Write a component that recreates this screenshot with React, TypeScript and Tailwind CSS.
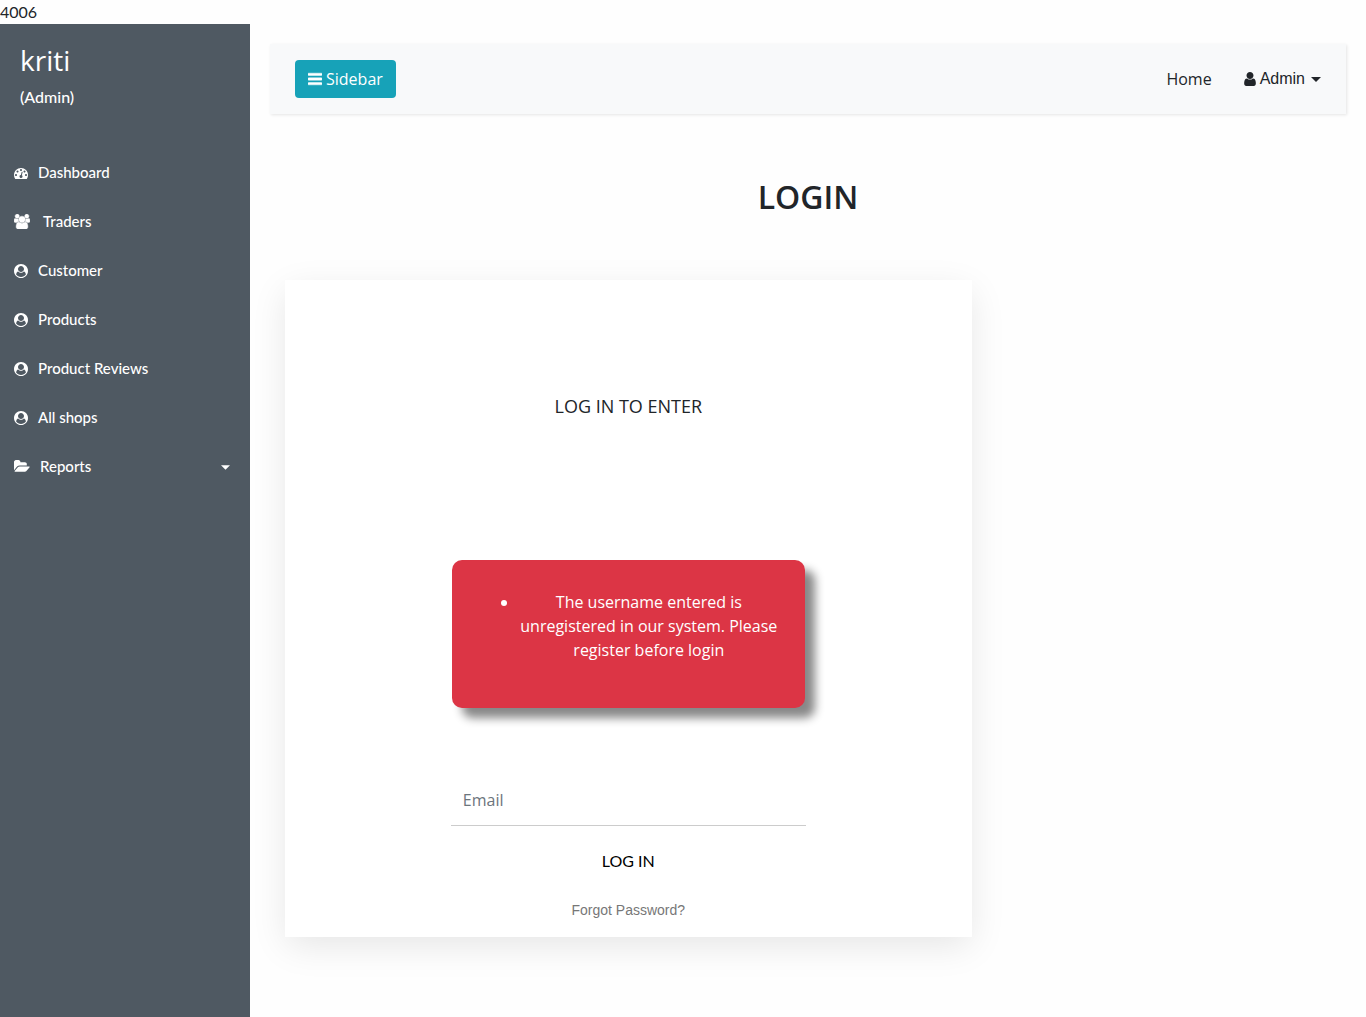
import React from "react";

type IconProps = { className?: string };

const wide = "h-4 w-[14px] shrink-0 fill-current";

function Gauge({ className = wide }: IconProps) {
  return (
    <svg viewBox="0 0 1792 1792" className={className} aria-hidden="true">
      <path d="M384 1152q0-53-37.5-90.5t-90.5-37.5-90.5 37.5-37.5 90.5 37.5 90.5 90.5 37.5 90.5-37.5 37.5-90.5zm192-448q0-53-37.5-90.5t-90.5-37.5-90.5 37.5-37.5 90.5 37.5 90.5 90.5 37.5 90.5-37.5 37.5-90.5zm428 481l101-382q6-26-7.5-48.5t-38.5-29.5-48 6.5-30 39.5l-101 382q-60 5-107 43.5t-63 98.5q-20 77 20 146t117 89 146-20 89-117q16-60-6-117t-72-91zm660-33q0-53-37.5-90.5t-90.5-37.5-90.5 37.5-37.5 90.5 37.5 90.5 90.5 37.5 90.5-37.5 37.5-90.5zm-640-640q0-53-37.5-90.5t-90.5-37.5-90.5 37.5-37.5 90.5 37.5 90.5 90.5 37.5 90.5-37.5 37.5-90.5zm448 192q0-53-37.5-90.5t-90.5-37.5-90.5 37.5-37.5 90.5 37.5 90.5 90.5 37.5 90.5-37.5 37.5-90.5zm320 448q0 261-141 483-19 29-54 29h-1402q-35 0-54-29-141-221-141-483 0-182 71-348t191-286 286-191 348-71 348 71 286 191 191 286 71 348z" />
    </svg>
  );
}

function Group() {
  return (
    <svg viewBox="0 0 1920 1792" className="h-[15px] w-4 shrink-0 fill-current" aria-hidden="true">
      <path d="M593 896q-162 5-265 128h-134q-82 0-138-40.500t-56-118.500q0-353 124-353 6 0 43.500 21t97.500 42.500 119 21.500q67 0 133-23-5 37-5 66 0 139 81 256zm1071 637q0 120-73 189.500t-194 69.500h-874q-121 0-194-69.500t-73-189.500q0-53 3.500-103.500t14-109 26.500-108.500 43-97.500 62-81 85.500-53.500 111.500-20q10 0 43 21.500t73 48 107 48 135 21.500 135-21.500 107-48 73-48 43-21.500q61 0 111.500 20t85.500 53.500 62 81 43 97.500 26.500 108.500 14 109 3.500 103.500zm-1024-1277q0 106-75 181t-181 75-181-75-75-181 75-181 181-75 181 75 75 181zm704 384q0 159-112.500 271.500t-271.500 112.500-271.500-112.500-112.500-271.500 112.500-271.500 271.500-112.500 271.500 112.500 112.500 271.500zm576 225q0 78-56 118.500t-138 40.500h-134q-103-123-265-128 81-117 81-256 0-29-5-66 66 23 133 23 59 0 119-21.500t97.500-42.500 43.500-21q124 0 124 353zm-128-609q0 106-75 181t-181 75-181-75-75-181 75-181 181-75 181 75 75 181z" stroke="currentColor" strokeWidth="50" />
    </svg>
  );
}

function UserCircle() {
  return (
    <svg viewBox="0 0 1792 1792" className={wide} aria-hidden="true">
      <path d="M1523 1339q-22-155-87.500-257.500t-184.500-118.500q-67 74-159.500 115.500t-195.500 41.500-195.500-41.500-159.500-115.500q-119 16-184.500 118.500t-87.500 257.500q106 150 271 237.500t356 87.500 356-87.500 271-237.500zm-243-699q0-159-112.500-271.500t-271.500-112.500-271.500 112.500-112.500 271.500 112.500 271.500 271.500 112.500 271.500-112.500 112.500-271.500zm512 256q0 182-71 347.500t-190.500 286-285.500 191.500-349 71-349-71-285.500-191.500-190.500-286-71-347.500 71-348 191-286 286-191 348-71 348 71 286 191 191 286 71 348z" fillRule="evenodd" />
    </svg>
  );
}

function FolderOpen() {
  return (
    <svg viewBox="0 0 1920 1792" className="h-[15px] w-4 shrink-0 fill-current" aria-hidden="true">
      <path d="M1879 952q0 31-31 66l-336 396q-43 51-120.500 86.500t-143.500 35.500h-1088q-34 0-60.500-13t-26.500-43q0-31 31-66l336-396q43-51 120.500-86.500t143.500-35.500h1088q34 0 60.500 13t26.500 43zm-343-344v160h-832q-94 0-197 47.500t-164 119.500l-337 396-5 6q0-4-.5-12.500t-.5-12.500v-960q0-92 66-158t158-66h320q92 0 158 66t66 158v32h544q92 0 158 66t66 158z" />
    </svg>
  );
}

function Bars() {
  return (
    <svg viewBox="128 128 1536 1536" className="size-[14px] fill-current" aria-hidden="true">
      <path d="M1664 1344v128q0 26-19 45t-45 19h-1408q-26 0-45-19t-19-45v-128q0-26 19-45t45-19h1408q26 0 45 19t19 45zm0-512v128q0 26-19 45t-45 19h-1408q-26 0-45-19t-19-45v-128q0-26 19-45t45-19h1408q26 0 45 19t19 45zm0-512v128q0 26-19 45t-45 19h-1408q-26 0-45-19t-19-45v-128q0-26 19-45t45-19h1408q26 0 45 19t19 45z" stroke="currentColor" strokeWidth="50" />
    </svg>
  );
}

function User() {
  return (
    <svg viewBox="256 128 1280 1536" className="h-[14px] w-3 fill-current" aria-hidden="true">
      <path d="M1536 1399q0 109-62.500 187t-150.500 78h-854q-88 0-150.500-78t-62.500-187q0-85 8.500-160.500t31.500-152 58.500-131 94-89 134.500-34.500q131 128 313 128t313-128q76 0 134.500 34.500t94 89 58.500 131 31.500 152 8.500 160.500zm-256-887q0 159-112.500 271.500t-271.500 112.500-271.500-112.500-112.500-271.500 112.500-271.500 271.500-112.500 271.500 112.500 112.500 271.500z" />
    </svg>
  );
}

function Caret({ className }: IconProps) {
  return (
    <svg viewBox="0 0 10 5" className={className} aria-hidden="true">
      <path d="M0 0h10L5 5z" />
    </svg>
  );
}

const items = [
  { label: "Dashboard", icon: <Gauge />, gap: "gap-[10px]" },
  { label: "Traders", icon: <Group />, gap: "gap-[13px]" },
  { label: "Customer", icon: <UserCircle />, gap: "gap-[10px]" },
  { label: "Products", icon: <UserCircle />, gap: "gap-[10px]" },
  { label: "Product Reviews", icon: <UserCircle />, gap: "gap-[10px]" },
  { label: "All shops", icon: <UserCircle />, gap: "gap-[10px]" },
];

export default function App() {
  return (
    <div className="flex min-h-screen flex-col bg-[#fefefe] font-['Open_Sans',sans-serif] text-base text-[#212529]">
      <div className="h-6 font-['Lato',sans-serif] leading-6">4006</div>
      <div className="flex flex-1">
        <aside className="w-[250px] shrink-0 bg-[#4f5962] text-white">
          <header className="px-5 pt-5">
            <h3 className="text-[28px] leading-8">kriti</h3>
            <p className="mt-2 font-['Lato',sans-serif] leading-[26px] font-medium">(Admin)</p>
          </header>
          <nav className="mt-[38px] font-['Lato',sans-serif] text-[15px] font-medium">
            <ul>
              {items.map((item) => (
                <li key={item.label}>
                  <a href="#" className={`flex h-[49px] items-center pl-[14px] ${item.gap}`}>
                    {item.icon}
                    {item.label}
                  </a>
                </li>
              ))}
              <li>
                <button className="flex h-[49px] w-full items-center gap-[10px] pr-5 pl-[14px]">
                  <FolderOpen />
                  Reports
                  <Caret className="mt-[2px] ml-auto h-[5px] w-[9px] fill-current" />
                </button>
              </li>
            </ul>
          </nav>
        </aside>
        <main className="min-w-0 flex-1 px-5 pt-5">
          <nav className="flex h-[70px] items-center justify-between bg-[#f8f9fa] px-[25px] shadow-[1px_1px_3px_rgba(0,0,0,0.1)]">
            <button className="flex h-[38px] items-center gap-1 rounded bg-[#17a2b8] px-[13px] text-white">
              <Bars />
              Sidebar
            </button>
            <div className="flex items-center gap-8">
              <a href="#">Home</a>
              <button className="flex items-center gap-1 font-['Liberation_Sans',sans-serif]">
                <User />
                Admin
                <Caret className="ml-[2px] h-[5px] w-[10px] fill-current" />
              </button>
            </div>
          </nav>
          <h1 className="mt-[60px] text-center text-[32px] leading-[46px] font-semibold">LOGIN</h1>
          <section className="mt-[60px] ml-[15px] w-[calc(64%-2px)] bg-white pt-28 pb-4 text-center shadow-[0_10px_34px_-2px_rgba(0,0,0,0.1)]">
            <h2 className="text-lg leading-7">LOG IN TO ENTER</h2>
            <form className="mx-auto mt-[140px] w-[calc(52%-2px)]" onSubmit={(e) => e.preventDefault()}>
              <div className="mx-px rounded-[10px] bg-[#dc3545] py-[30px] pr-[26px] pl-[67px] text-white shadow-[10px_10px_10px_#888]">
                <ul className="mb-4 list-disc leading-6">
                  <li>The username entered is unregistered in our system. Please register before login</li>
                </ul>
              </div>
              <input
                type="email"
                aria-label="Email"
                placeholder="Email"
                className="mt-[66px] h-[52px] w-full border-b border-[#ccc] bg-transparent px-3 outline-none placeholder:text-[#6c757d]"
              />
              <button className="mt-[23px] block w-full font-['Lato',sans-serif] leading-6 text-black">LOG IN</button>
              <a href="#" className="mt-[27px] block font-['Liberation_Sans',sans-serif] text-sm leading-[21px] text-[#777]">
                Forgot Password?
              </a>
            </form>
          </section>
        </main>
      </div>
    </div>
  );
}
